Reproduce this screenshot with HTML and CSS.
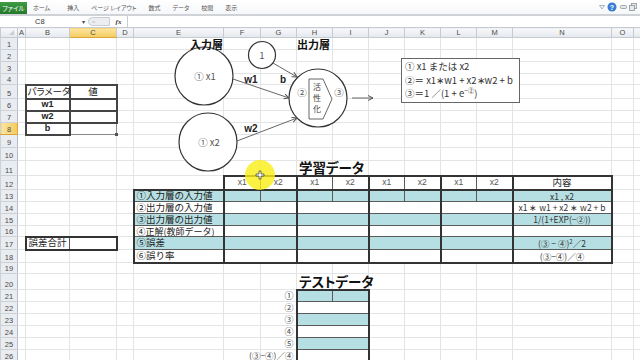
FILE: index.html
```html
<!DOCTYPE html>
<html lang="ja">
<head>
<meta charset="utf-8">
<title>Excel - 学習データ</title>
<link rel="stylesheet" href="styles.css">
</head>
<body>
<header class="ribbon">
  <span class="file-tab">ファイル</span>
  <nav class="tabs">
    <span>ホーム</span><span>挿入</span><span>ページ レイアウト</span><span>数式</span><span>データ</span><span>校閲</span><span>表示</span>
  </nav>
  <svg class="winctl" width="44" height="14" viewBox="0 0 44 14">
    <path d="M3.5 5.5h5l-2.5 3.5z" fill="none" stroke="#9aa0a8" stroke-width="0.8"/>
    <circle cx="16" cy="7" r="4.5" fill="#3a7bd5"/>
    <text x="16" y="9.6" class="help-q">?</text>
    <rect x="24.5" y="5.5" width="6" height="3" rx="1" fill="#e6e8eb" stroke="#8d939b" stroke-width="0.8"/>
    <rect x="35.5" y="3.5" width="5" height="5" fill="#e6e8eb" stroke="#8d939b" stroke-width="0.8"/>
    <rect x="33.5" y="5.5" width="5" height="5" fill="#e6e8eb" stroke="#8d939b" stroke-width="0.8"/>
  </svg>
</header>
<div class="fbar">
  <div class="namebox"><span class="nb-text">C8</span><span class="nb-arrow">▾</span></div>
  <div class="fpill">=</div>
  <div class="fx">fx</div>
  <div class="finput"></div>
</div>
<table class="grid">
  <colgroup>
    <col class="w-rh"><col class="w-a"><col class="w-b"><col class="w-c"><col class="w-d"><col class="w-e">
    <col class="w-f"><col class="w-n36"><col class="w-n36"><col class="w-n36"><col class="w-n36"><col class="w-n36"><col class="w-n36"><col class="w-n36">
    <col class="w-nn"><col class="w-o"><col class="w-p">
  </colgroup>
  <thead>
    <tr class="h10"><th class="corner"></th><th>A</th><th>B</th><th class="sel">C</th><th>D</th><th>E</th><th>F</th><th>G</th><th>H</th><th>I</th><th>J</th><th>K</th><th>L</th><th>M</th><th>N</th><th>O</th><th></th></tr>
  </thead>
  <tbody>
    <tr class="h12"><th>1</th><td></td><td></td><td></td><td></td><td></td><td></td><td></td><td></td><td></td><td></td><td></td><td></td><td></td><td></td><td></td><td></td></tr>
    <tr class="h12"><th>2</th><td></td><td></td><td></td><td></td><td></td><td></td><td></td><td></td><td></td><td></td><td></td><td></td><td></td><td></td><td></td><td></td></tr>
    <tr class="h12"><th>3</th><td></td><td></td><td></td><td></td><td></td><td></td><td></td><td></td><td></td><td></td><td></td><td></td><td></td><td></td><td></td><td></td></tr>
    <tr class="h11"><th>4</th><td></td><td></td><td></td><td></td><td></td><td></td><td></td><td></td><td></td><td></td><td></td><td></td><td></td><td></td><td></td><td></td></tr>
    <tr class="h14"><th>5</th><td></td><td class="pb kana">パラメータ</td><td class="pb c">値</td><td></td><td></td><td></td><td></td><td></td><td></td><td></td><td></td><td></td><td></td><td></td><td></td><td></td></tr>
    <tr class="h12"><th>6</th><td></td><td class="pb c bold">w1</td><td class="pb"></td><td></td><td></td><td></td><td></td><td></td><td></td><td></td><td></td><td></td><td></td><td></td><td></td><td></td></tr>
    <tr class="h12"><th>7</th><td></td><td class="pb c bold">w2</td><td class="pb"></td><td></td><td></td><td></td><td></td><td></td><td></td><td></td><td></td><td></td><td></td><td></td><td></td><td></td></tr>
    <tr class="h12"><th class="sel">8</th><td></td><td class="pb c bold">b</td><td class="cur"></td><td></td><td></td><td></td><td></td><td></td><td></td><td></td><td></td><td></td><td></td><td></td><td></td><td></td></tr>
    <tr class="h13"><th>9</th><td></td><td></td><td></td><td></td><td></td><td></td><td></td><td></td><td></td><td></td><td></td><td></td><td></td><td></td><td></td><td></td></tr>
    <tr class="h13"><th>10</th><td></td><td></td><td></td><td></td><td></td><td></td><td></td><td></td><td></td><td></td><td></td><td></td><td></td><td></td><td></td><td></td></tr>
    <tr class="h14"><th>11</th><td></td><td></td><td></td><td></td><td></td><td></td><td></td><td class="title">学習データ</td><td></td><td></td><td></td><td></td><td></td><td></td><td></td><td></td></tr>
    <tr class="h14"><th>12</th><td></td><td></td><td></td><td></td><td></td>
      <td class="sc tt tl hd">x1</td><td class="sc tt hd">x2</td><td class="sc tt tl hd">x1</td><td class="sc tt hd">x2</td><td class="sc tt tl hd">x1</td><td class="sc tt hd">x2</td><td class="sc tt tl hd">x1</td><td class="sc tt hd">x2</td>
      <td class="sc tt tl tr c">内容</td><td></td><td></td></tr>
    <tr class="h12"><th>13</th><td></td><td></td><td></td><td></td>
      <td class="sc tt tl tr teal">①入力層の入力値</td>
      <td class="sc tt tl teal"></td><td class="sc tt teal"></td><td class="sc tt tl teal"></td><td class="sc tt teal"></td><td class="sc tt tl teal"></td><td class="sc tt teal"></td><td class="sc tt tl teal"></td><td class="sc tt teal"></td>
      <td class="sc tt tl tr teal c fm">x1 , x2</td><td></td><td></td></tr>
    <tr class="h12"><th>14</th><td></td><td></td><td></td><td></td>
      <td class="sc tl tr">②出力層の入力値</td>
      <td colspan="2" class="sc tl"></td><td colspan="2" class="sc tl"></td><td colspan="2" class="sc tl"></td><td colspan="2" class="sc tl"></td>
      <td class="sc tl tr c fm">x1 ∗ w1 + x2 ∗ w2 + b</td><td></td><td></td></tr>
    <tr class="h12"><th>15</th><td></td><td></td><td></td><td></td>
      <td class="sc tl tr teal">③出力層の出力値</td>
      <td colspan="2" class="sc tl teal"></td><td colspan="2" class="sc tl teal"></td><td colspan="2" class="sc tl teal"></td><td colspan="2" class="sc tl teal"></td>
      <td class="sc tl tr teal c fm">1/(1+EXP(−②))</td><td></td><td></td></tr>
    <tr class="h11"><th>16</th><td></td><td></td><td></td><td></td>
      <td class="sc tl tr sm">④正解(教師データ)</td>
      <td colspan="2" class="sc tl"></td><td colspan="2" class="sc tl"></td><td colspan="2" class="sc tl"></td><td colspan="2" class="sc tl"></td>
      <td class="sc tl tr"></td><td></td><td></td></tr>
    <tr class="h13"><th>17</th><td></td><td class="sc tt tb tl">誤差合計</td><td class="sc tt tb tr"></td><td></td>
      <td class="sc tl tr teal">⑤誤差</td>
      <td colspan="2" class="sc tl teal"></td><td colspan="2" class="sc tl teal"></td><td colspan="2" class="sc tl teal"></td><td colspan="2" class="sc tl teal"></td>
      <td class="sc tl tr teal c fm">(③ − ④)<sup>2</sup>／2</td><td></td><td></td></tr>
    <tr class="h13"><th>18</th><td></td><td></td><td></td><td></td>
      <td class="sc tl tr tb">⑥誤り率</td>
      <td colspan="2" class="sc tl tb"></td><td colspan="2" class="sc tl tb"></td><td colspan="2" class="sc tl tb"></td><td colspan="2" class="sc tl tb"></td>
      <td class="sc tl tr tb c fm">(③−④)／④</td><td></td><td></td></tr>
    <tr class="h11"><th>19</th><td></td><td></td><td></td><td></td><td></td><td></td><td></td><td></td><td></td><td></td><td></td><td></td><td></td><td></td><td></td><td></td></tr>
    <tr class="h16"><th>20</th><td></td><td></td><td></td><td></td><td></td><td></td><td></td><td class="title">テストデータ</td><td></td><td></td><td></td><td></td><td></td><td></td><td></td><td></td></tr>
    <tr class="h12"><th>21</th><td></td><td></td><td></td><td></td><td></td><td></td><td class="rl">①</td><td class="sc tt tl teal"></td><td class="sc tt tr teal"></td><td></td><td></td><td></td><td></td><td></td><td></td><td></td></tr>
    <tr class="h12"><th>22</th><td></td><td></td><td></td><td></td><td></td><td></td><td class="rl">②</td><td colspan="2" class="sc tl tr"></td><td></td><td></td><td></td><td></td><td></td><td></td><td></td></tr>
    <tr class="h12"><th>23</th><td></td><td></td><td></td><td></td><td></td><td></td><td class="rl">③</td><td colspan="2" class="sc tl tr teal"></td><td></td><td></td><td></td><td></td><td></td><td></td><td></td></tr>
    <tr class="h12"><th>24</th><td></td><td></td><td></td><td></td><td></td><td></td><td class="rl">④</td><td colspan="2" class="sc tl tr"></td><td></td><td></td><td></td><td></td><td></td><td></td><td></td></tr>
    <tr class="h12"><th>25</th><td></td><td></td><td></td><td></td><td></td><td></td><td class="rl">⑤</td><td colspan="2" class="sc tl tr teal"></td><td></td><td></td><td></td><td></td><td></td><td></td><td></td></tr>
    <tr class="h12"><th>26</th><td></td><td></td><td></td><td></td><td></td><td></td><td class="rl top"><div class="ovl">(③−④)／④</div></td><td colspan="2" class="sc tl tr tb"></td><td></td><td></td><td></td><td></td><td></td><td></td><td></td></tr>
  </tbody>
</table>

<svg class="diagram" width="640" height="360" viewBox="0 0 640 360">
  <defs>
    <marker id="ah" markerWidth="6" markerHeight="6" refX="5.5" refY="3" orient="auto" markerUnits="userSpaceOnUse">
      <path d="M0.5,0.5 L5.5,3 L0.5,5.5" fill="none" stroke="#555" stroke-width="1"/>
    </marker>
  </defs>
  <circle cx="204" cy="76" r="29" class="dg-shape"/>
  <circle cx="208" cy="142" r="29" class="dg-shape"/>
  <circle cx="262" cy="55" r="13.5" class="dg-shape"/>
  <circle cx="318" cy="98" r="29" class="dg-shape"/>
  <text x="190" y="48.5" class="dg-title">入力層</text>
  <text x="297" y="48.5" class="dg-title">出力層</text>
  <polygon points="309,79 323,79 332,99 323,119 309,119" class="dg-box"/>
  <text class="dg-vert"><tspan x="317" y="90">活</tspan><tspan x="317" y="101">性</tspan><tspan x="317" y="112">化</tspan></text>
  <text x="302" y="96" class="dg-node">②</text>
  <text x="339" y="96" class="dg-node">③</text>
  <text x="205" y="80" class="dg-node">①  x1</text>
  <text x="209" y="146" class="dg-node">①  x2</text>
  <text x="262" y="59" class="dg-node">1</text>
  <line x1="233" y1="79" x2="289" y2="98" class="dg-link" marker-end="url(#ah)"/>
  <line x1="273" y1="63" x2="297" y2="77" class="dg-link" marker-end="url(#ah)"/>
  <line x1="237" y1="141" x2="297" y2="118" class="dg-link" marker-end="url(#ah)"/>
  <line x1="352" y1="98" x2="373" y2="98" class="dg-link" marker-end="url(#ah)"/>
  <text x="251" y="83" class="dg-w">w1</text>
  <text x="283" y="83" class="dg-w">b</text>
  <text x="251" y="132" class="dg-w">w2</text>
</svg>

<div class="formula-note">
  <p>① x1 または x2</p>
  <p>②＝ x1∗w1 + x2∗w2 + b</p>
  <p>③＝1 ／(1 + e<sup>−②</sup>)</p>
</div>

<div class="cursor">
  <svg width="10" height="10" viewBox="0 0 10 10"><path d="M4 1h2v3h3v2H6v3H4V6H1V4h3z" fill="#fff" stroke="#333" stroke-width="0.7"/></svg>
</div>
</body>
</html>
```

FILE: styles.css
```css
* { box-sizing: border-box; margin: 0; padding: 0; }
body {
  width: 640px; height: 360px; overflow: hidden; position: relative;
  background: #fff; color: #222;
  font-family: "Noto Sans CJK JP", "Noto Sans", sans-serif;
}

/* ribbon */
.ribbon {
  height: 16px; display: flex; align-items: flex-start;
  background: linear-gradient(#fff, #f6f7f9);
  border-bottom: 2px solid #cfd3d8;
}
.file-tab {
  margin-top: 2px; width: 27px; height: 12px;
  background: linear-gradient(#3f9c43, #24782a);
  color: #fff; font-size: 6.5px; font-feature-settings: "palt";
  display: flex; align-items: center; justify-content: center;
}
.tabs {
  display: flex; gap: 12px; margin-left: 6px; margin-top: 3px;
  font-size: 6px; color: #555; font-feature-settings: "palt";
}
.tabs span:nth-child(2) { margin-left: 5px; }
.winctl { margin-left: auto; }
.help-q { font: bold 7px "Liberation Sans", sans-serif; fill: #fff; text-anchor: middle; }

/* formula bar */
.fbar { height: 11px; display: flex; align-items: center; font-size: 7.5px; color: #333; }
.namebox { width: 88px; height: 11px; display: flex; align-items: center; }
.nb-text { margin-left: 35px; font-family: "Liberation Sans", sans-serif; }
.nb-arrow { margin-left: auto; margin-right: 3px; font-size: 6px; color: #444; }
.fpill {
  width: 22px; height: 9px; border-radius: 5px 0 0 5px;
  background: #eceef1; border: 1px solid #c9cdd2;
  color: #c0c4c9; font-size: 6px; line-height: 7px; padding-left: 3px;
}
.fx { width: 17px; text-align: center; font: italic bold 7px "Liberation Serif", serif; color: #333; }
.finput { flex: 1; height: 11px; border-left: 1px solid #c9cdd2; }

/* sheet grid */
.grid { border-collapse: collapse; table-layout: fixed; width: 653px; font-size: 9.5px; }
.w-rh { width: 17px; } .w-a { width: 8px; } .w-b { width: 44px; } .w-c { width: 47px; }
.w-d { width: 17px; } .w-e { width: 90px; } .w-f { width: 37px; } .w-n36 { width: 36px; }
.w-nn { width: 99px; } .w-o { width: 22px; } .w-p { width: 20px; }
.h10 { height: 10px; } .h11 { height: 11px; } .h12 { height: 12px; }
.h13 { height: 13px; } .h14 { height: 14px; } .h16 { height: 16px; }

.grid th {
  font-family: "Liberation Sans", sans-serif; font-weight: normal; font-size: 7.5px;
  color: #4a4a4a; line-height: 1; padding: 0;
  background: linear-gradient(#f7f8fa, #e4e8ed);
  border: 1px solid #c6cbd2;
}
.grid tbody th { background: #e9ecf1; border-color: #ccd1d8; border-right-color: #b9bec6; vertical-align: bottom; padding-bottom: 1px; }
.grid th.sel { background: linear-gradient(#fbe5a2, #f4cb5c); border-bottom-color: #d9a43a; }
.grid tbody th.sel { background: linear-gradient(90deg, #fbe5a2, #f4cb5c); border-right-color: #d9a43a; }
.grid th.corner { position: relative; }
.grid th.corner::after {
  content: ""; position: absolute; right: 3px; bottom: 2px;
  border-left: 5px solid transparent; border-bottom: 5px solid #c9ccd1;
}

.grid td {
  border: 1px solid #e3e4e6; padding: 0 2px; white-space: nowrap;
  line-height: 1; vertical-align: middle; color: #222;
}
.grid td.c { text-align: center; }
.grid td.sm { font-size: 9px; }
.grid td.kana { font-feature-settings: "palt"; font-size: 9.5px; padding-left: 1px; }
.grid td.bold { font-weight: bold; font-family: "Liberation Sans", sans-serif; font-size: 9px; }
.grid td.pb { border: 2px solid #444; }
.grid td.cur {
  position: relative;
  border-top: 2px solid #444; border-left: 2px solid #444;
  border-right: 1px double #8a8a8a; border-bottom: 1px double #8a8a8a;
}
.grid td.cur::after {
  content: ""; position: absolute; right: -2px; bottom: -2px;
  width: 3px; height: 3px; background: #555;
}
.grid td.sc { border: 1px double #5a5a5a; }
.grid td.tt { border-top: 2px solid #333; }
.grid td.tb { border-bottom: 2px solid #333; }
.grid td.tl { border-left: 2px solid #333; }
.grid td.tr { border-right: 2px solid #333; }
.grid td.teal { background: #b6dfe3; }
.grid td.hd { text-align: center; font-family: "Liberation Sans", sans-serif; font-size: 8.5px; color: #555; }
.grid td.fm { font-size: 8.5px; color: #333; }
.grid td.fm sup { font-size: 6px; vertical-align: 3px; line-height: 0; }
.grid td.title {
  font-size: 13.5px; font-weight: bold; color: #111; vertical-align: bottom;
  padding: 0 0 0 2px; font-feature-settings: "palt";
}
.grid td.rl { text-align: right; color: #444; padding-right: 2px; font-size: 9px; }
.grid td.top { vertical-align: top; padding-top: 1px; font-size: 8.5px; }
.ovl { display: flex; justify-content: flex-end; }

/* floating shapes */
.diagram { position: absolute; left: 0; top: 0; pointer-events: none; }
.dg-title { font-size: 11px; font-weight: bold; fill: #111; }
.dg-shape { fill: #fff; stroke: #333; stroke-width: 1.2; }
.dg-box { fill: #fff; stroke: #555; stroke-width: 0.9; }
.dg-node { font-size: 9.5px; fill: #555; text-anchor: middle; }
.dg-vert { font-size: 8px; fill: #444; text-anchor: middle; }
.dg-w { font: bold 10px "Liberation Sans", sans-serif; fill: #222; text-anchor: middle; }
.dg-link { stroke: #666; stroke-width: 1; fill: none; }

.formula-note {
  position: absolute; left: 401px; top: 58px; width: 119px; height: 45px;
  border: 1px solid #666; background: #fff;
  padding: 1px 3px; font-size: 9.5px; line-height: 13.5px; color: #333;
}
.formula-note p { white-space: nowrap; }
.formula-note sup { font-size: 6.5px; vertical-align: 4px; line-height: 0; }

.cursor {
  position: absolute; left: 245px; top: 160px; width: 30px; height: 30px; border-radius: 50%;
  background: rgba(250, 238, 20, 0.8);
  display: flex; align-items: center; justify-content: center;
}
.cursor svg { display: block; }
```
